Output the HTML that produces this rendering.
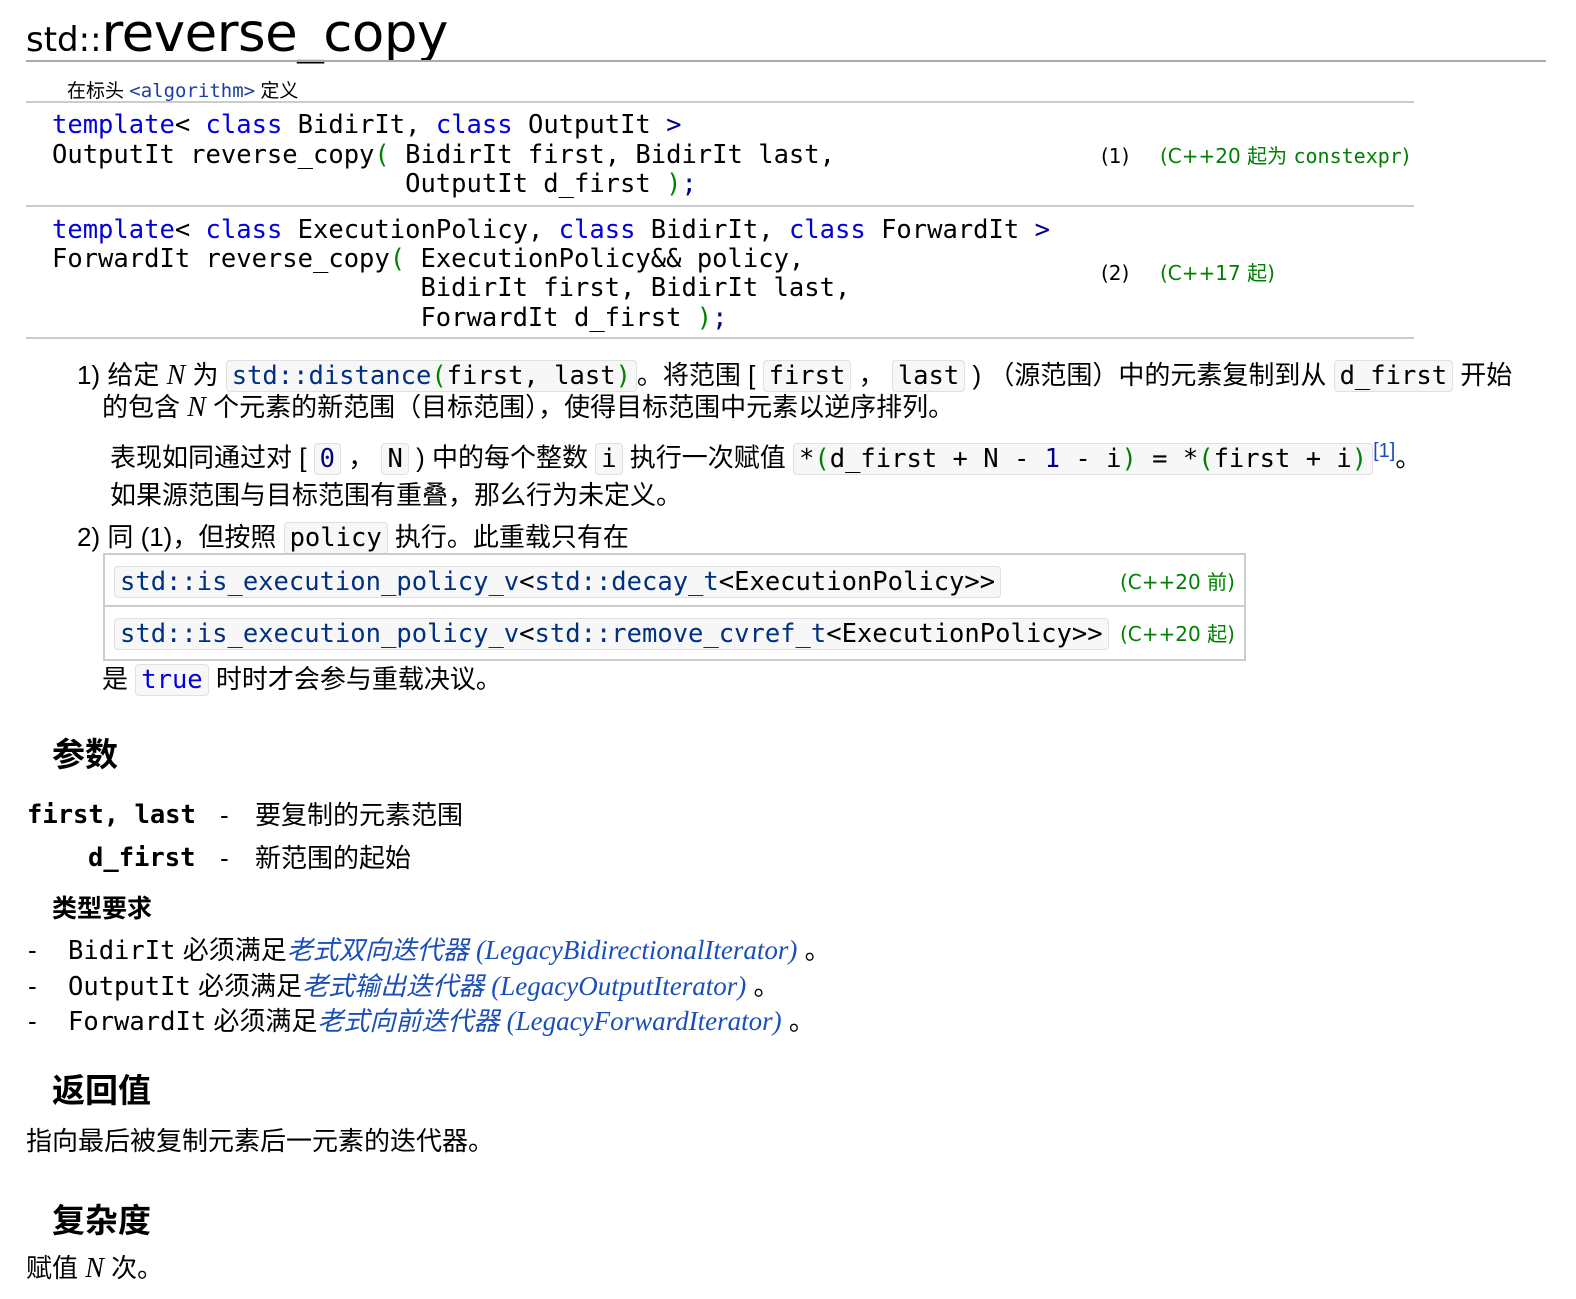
<!DOCTYPE html>
<html><head><meta charset="utf-8">
<style>
body{margin:0;background:#fff;width:1576px;height:1299px;position:relative;overflow:hidden;font-family:"Liberation Sans","Noto Sans CJK SC",sans-serif;color:#000}
.l{position:absolute;white-space:pre;line-height:30px;font-size:26px}
.m{font-family:"DejaVu Sans Mono","Liberation Mono","Noto Sans CJK SC",monospace;font-size:25.5px}
.k{color:#0000dd}.g{color:#008000}.n{color:#000080}.s{color:#003080}
.c{font-family:"DejaVu Sans Mono","Liberation Mono",monospace;background:#f7f7f7;border:1.5px solid #e0e0e0;border-radius:4px;padding:0 5px;font-size:25.5px}
.hr{position:absolute;height:2px;background:#cccccc}
.lab{font-size:20px;color:#008000;font-family:"DejaVu Sans","Noto Sans CJK SC",sans-serif}
.h{position:absolute;font-weight:bold;font-size:33px;line-height:40px}
i.N{font-family:"Liberation Serif",serif;font-size:28px}
.it{color:#1a4fb8;font-style:italic}
</style></head><body>
<div class="l" style="left:26px;top:6px;line-height:56px;font-size:36px"><span style="font-family:'DejaVu Sans',sans-serif;font-size:34px">std::</span><span style="font-family:'DejaVu Sans',sans-serif;font-size:53px;letter-spacing:-0.5px">reverse_copy</span></div>
<div class="hr" style="left:26px;top:60px;width:1520px;background:#aaa"></div>
<div class="l" style="left:67px;top:78px;font-size:19px;line-height:26px">在标头 <span class="m" style="font-size:19px;color:#1a3fa0">&lt;algorithm&gt;</span> 定义</div>
<div class="hr" style="left:26px;top:101px;width:1388px"></div>
<div class="l m" style="left:52px;top:111px;line-height:29.5px"><span class="k">template</span>&lt; <span class="k">class</span> BidirIt, <span class="k">class</span> OutputIt <span class="n">&gt;</span>
OutputIt reverse_copy<span class="g">(</span> BidirIt first, BidirIt last,
                       OutputIt d_first <span class="g">)</span><span class="n">;</span></div>
<div class="l lab" style="left:1101px;top:141px;color:#000">(1)</div>
<div class="l lab" style="left:1160px;top:141px">(C++20 起为 <span class="m" style="font-size:20px">constexpr</span>)</div>
<div class="hr" style="left:26px;top:205px;width:1388px"></div>
<div class="l m" style="left:52px;top:216px;line-height:29.2px"><span class="k">template</span>&lt; <span class="k">class</span> ExecutionPolicy, <span class="k">class</span> BidirIt, <span class="k">class</span> ForwardIt <span class="n">&gt;</span>
ForwardIt reverse_copy<span class="g">(</span> ExecutionPolicy&amp;&amp; policy,
                        BidirIt first, BidirIt last,
                        ForwardIt d_first <span class="g">)</span><span class="n">;</span></div>
<div class="l lab" style="left:1101px;top:258px;color:#000">(2)</div>
<div class="l lab" style="left:1160px;top:258px">(C++17 起)</div>
<div class="hr" style="left:26px;top:337px;width:1388px"></div>

<div class="l" style="left:77px;top:360px">1) 给定 <i class="N">N</i> 为 <span class="c"><span class="s">std::distance</span><span class="g">(</span>first, last<span class="g">)</span></span>。将范围 [ <span class="c">first</span> ， <span class="c">last</span> ) （源范围）中的元素复制到从 <span class="c">d_first</span> 开始</div>
<div class="l" style="left:102px;top:392px">的包含 <i class="N">N</i> 个元素的新范围（目标范围），使得目标范围中元素以逆序排列。</div>
<div class="l" style="left:110px;top:436px">表现如同通过对 [ <span class="c n">0</span> ， <span class="c">N</span> ) 中的每个整数 <span class="c">i</span> 执行一次赋值 <span class="c">*<span class="g">(</span>d_first + N - <span class="n">1</span> - i<span class="g">)</span> = *<span class="g">(</span>first + i<span class="g">)</span></span><sup style="color:#1a4fb8;font-size:20px">[1]</sup>。</div>
<div class="l" style="left:110px;top:480px">如果源范围与目标范围有重叠，那么行为未定义。</div>
<div class="l" style="left:77px;top:522px">2) 同 (1)，但按照 <span class="c">policy</span> 执行。此重载只有在</div>
<div style="position:absolute;left:103px;top:553px;width:1139px;height:104px;border:2px solid #ccc"></div>
<div class="hr" style="left:103px;top:605px;width:1141px"></div>
<div class="l" style="left:114px;top:566px"><span class="c"><span class="s">std::is_execution_policy_v</span>&lt;<span class="s">std::decay_t</span>&lt;ExecutionPolicy&gt;&gt;</span></div>
<div class="l lab" style="left:1120px;top:567px">(C++20 前)</div>
<div class="l" style="left:114px;top:618px"><span class="c"><span class="s">std::is_execution_policy_v</span>&lt;<span class="s">std::remove_cvref_t</span>&lt;ExecutionPolicy&gt;&gt;</span></div>
<div class="l lab" style="left:1120px;top:619px">(C++20 起)</div>
<div class="l" style="left:102px;top:664px">是 <span class="c k">true</span> 时时才会参与重载决议。</div>

<div class="h" style="left:52px;top:735px">参数</div>
<div class="l m" style="left:27px;top:800px;font-weight:bold">first, last</div>
<div class="l" style="left:220px;top:800px">-</div>
<div class="l" style="left:255px;top:800px">要复制的元素范围</div>
<div class="l m" style="left:88px;top:843px;font-weight:bold">d_first</div>
<div class="l" style="left:220px;top:843px">-</div>
<div class="l" style="left:255px;top:843px">新范围的起始</div>
<div class="l" style="left:52px;top:894px;font-weight:bold;font-size:25px">类型要求</div>
<div class="l" style="left:28px;top:935px">-</div>
<div class="l" style="left:68px;top:935px"><span class="m">BidirIt</span> 必须满足<span class="it">老式双向迭代器 <span style="font-family:'Liberation Serif',serif;font-size:27px">(LegacyBidirectionalIterator)</span></span> 。</div>
<div class="l" style="left:28px;top:971px">-</div>
<div class="l" style="left:68px;top:971px"><span class="m">OutputIt</span> 必须满足<span class="it">老式输出迭代器 <span style="font-family:'Liberation Serif',serif;font-size:27px">(LegacyOutputIterator)</span></span> 。</div>
<div class="l" style="left:28px;top:1006px">-</div>
<div class="l" style="left:68px;top:1006px"><span class="m">ForwardIt</span> 必须满足<span class="it">老式向前迭代器 <span style="font-family:'Liberation Serif',serif;font-size:27px">(LegacyForwardIterator)</span></span> 。</div>

<div class="h" style="left:52px;top:1071px">返回值</div>
<div class="l" style="left:26px;top:1126px">指向最后被复制元素后一元素的迭代器。</div>
<div class="h" style="left:52px;top:1201px">复杂度</div>
<div class="l" style="left:26px;top:1253px">赋值 <i class="N">N</i> 次。</div>
</body></html>
